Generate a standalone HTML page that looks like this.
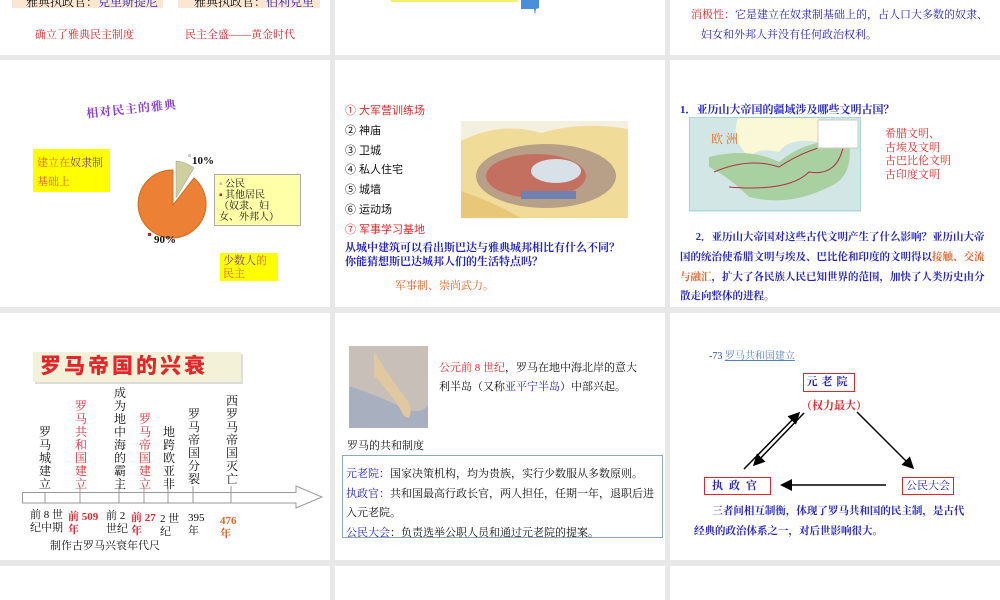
<!DOCTYPE html>
<html><head><meta charset="utf-8"><style>
*{margin:0;padding:0;box-sizing:border-box}
body{width:1000px;height:600px;background:#e8e8e8;position:relative;overflow:hidden;font-family:"Liberation Serif","Noto Serif CJK SC","Noto Sans CJK SC",serif;font-size:11px;color:#111}
.s{position:absolute;background:#fff;overflow:hidden}
.a{position:absolute;white-space:nowrap}
.r{color:#e2262a}.b{color:#2323c8}.o{color:#e8622a}
.v{position:absolute;width:14px;text-align:center;line-height:13px;font-size:12px}
</style></head><body>
<!-- row1 -->
<div class="s" style="left:0;top:0;width:330px;height:55px">
 <div class="a" style="left:12px;top:-7px;width:151px;height:15px;background:#fbe6d2;padding-left:14px;font-size:12px">雅典执政官：<span class="b">克里斯提尼</span></div>
 <div class="a" style="left:178px;top:-7px;width:142px;height:15px;background:#fbe6d2;padding-left:16px;font-size:12px">雅典执政官：<span class="b">伯利克里</span></div>
 <div class="a r" style="left:35px;top:26px">确立了雅典民主制度</div>
 <div class="a r" style="left:185px;top:26px">民主全盛——黄金时代</div>
</div>
<div class="s" style="left:335px;top:0;width:330px;height:55px">
 <div class="a" style="left:56px;top:0;width:127px;height:2px;background:#f5f06a"></div>
 <svg class="a" style="left:186px;top:0" width="20" height="16"><path d="M0 0H18V8L15 9L14 15L13 9L0 9Z" fill="#4a8fd8"/></svg>
</div>
<div class="s" style="left:670px;top:0;width:330px;height:55px">
 <div class="a b" style="left:21px;top:6px"><span class="r">消极性：</span>它是建立在奴隶制基础上的，占人口大多数的奴隶、</div>
 <div class="a b" style="left:31px;top:26px">妇女和外邦人并没有任何政治权利。</div>
</div>
<!-- row2 -->
<div class="s" style="left:0;top:60px;width:330px;height:247px">
 <div class="a" style="left:86px;top:40px;color:#8a3ad8;font-weight:bold;font-size:12px;transform:rotate(-6deg);letter-spacing:1px">相对民主的雅典</div>
 <div class="a" style="left:33px;top:89px;width:77px;height:43px;background:#ffff00;padding:5px 4px;line-height:19px;white-space:normal"><span class="o">建立在</span><span style="color:#7a3a8a">奴隶制</span><br><span class="o">基础上</span></div>
 <svg class="a" style="left:130px;top:90px" width="180" height="100">
  <path d="M43 55 L43 20 A34 34 0 1 0 64 28 Z" fill="#ec8034" stroke="#d06a20" stroke-width="1"/>
  <path d="M46 48 L46 11 A36 36 0 0 1 64 18 Z" fill="#cfcf9e" stroke="#999" stroke-width=".5"/>
  <rect x="58" y="4" width="3" height="3" fill="#ccc"/>
  <rect x="18" y="83" width="3" height="3" fill="#b22"/>
 </svg>
 <div class="a" style="left:192px;top:95px;font-weight:bold">10%</div>
 <div class="a" style="left:154px;top:174px;font-weight:bold">90%</div>
 <div class="a" style="left:214px;top:114px;width:87px;height:52px;background:#ffffa8;border:1px solid #aaa;font-size:10px;line-height:11px;padding:4px 4px;white-space:normal">
  <span style="color:#bbb">▪</span> 公民<br><span style="color:#b22">▪</span> 其他居民<br>（奴隶、妇<br>女、外邦人）</div>
 <div class="a" style="left:220px;top:193px;width:58px;height:28px;background:#ffff00;padding:2px 3px;line-height:13px;font-size:11px"><span style="color:#7a3a8a">少数人</span><span class="o">的</span><br><span class="o">民主</span></div>
</div>
<div class="s" style="left:335px;top:60px;width:330px;height:247px">
 <div class="a" style="left:10px;top:42px;line-height:19.8px;font-family:'Liberation Sans','Noto Sans CJK SC',sans-serif;font-size:11px"><span class="r">① 大军营训练场</span><br>② 神庙<br>③ 卫城<br>④ 私人住宅<br>⑤ 城墙<br>⑥ 运动场<br><span class="r">⑦ 军事学习基地</span></div>
 <svg class="a" style="left:126px;top:61px" width="167" height="97">
  <rect width="167" height="97" fill="#f0dc98"/>
  <path d="M0 20 Q40 0 80 12 Q120 0 167 8 V0 H0Z" fill="#f3f0e0"/>
  <ellipse cx="85" cy="55" rx="70" ry="32" fill="#b8a088"/>
  <ellipse cx="75" cy="55" rx="50" ry="22" fill="#c47060"/>
  <ellipse cx="95" cy="50" rx="25" ry="12" fill="#d8e0e8"/>
  <rect x="60" y="70" width="55" height="8" fill="#7080b0"/>
  <path d="M0 70 Q30 80 60 97 H0Z" fill="#e8c878"/>
 </svg>
 <div class="a b" style="left:10px;top:181px;line-height:14px;font-weight:bold">从城中建筑可以看出斯巴达与雅典城邦相比有什么不同？<br>你能猜想斯巴达城邦人们的生活特点吗？</div>
 <div class="a o" style="left:60px;top:217px">军事制、崇尚武力。</div>
</div>
<div class="s" style="left:670px;top:60px;width:330px;height:247px">
 <div class="a b" style="left:10px;top:41px;font-weight:bold">1．亚历山大帝国的疆域涉及哪些文明古国？</div>
 <svg class="a" style="left:19px;top:57px" width="172" height="95">
  <rect x=".5" y=".5" width="171" height="93" fill="#fbf8d8" stroke="#9cc"/>
  <path d="M0 0 H50 Q40 20 60 40 Q70 30 90 35 Q100 20 130 25 V0H172V95H0Z" fill="#b8dcef" opacity=".6"/>
  <path d="M20 40 Q60 30 90 45 Q120 20 160 25 Q165 60 140 70 Q100 90 60 80 Q40 60 20 50Z" fill="#a8d0a0"/>
  <path d="M25 55 Q60 40 90 50 Q120 30 155 25 Q150 60 120 55 Q100 75 40 70" fill="none" stroke="#b03040" stroke-width="1"/>
  <rect x="129" y="3" width="40" height="28" fill="#fff" stroke="#ccc"/>
  <text x="22" y="26" fill="#e87020" font-size="12">欧  洲</text>
 </svg>
 <div class="a r" style="left:215px;top:68px;line-height:13.5px">希腊文明、<br>古埃及文明<br>古巴比伦文明<br>古印度文明</div>
 <div class="a b" style="left:10px;top:168px;line-height:19.8px;width:312px;white-space:normal;font-weight:bold;font-size:10.5px">&nbsp;&nbsp;&nbsp;&nbsp;&nbsp;&nbsp;2．亚历山大帝国对这些古代文明产生了什么影响？亚历山大帝国的统治使希腊文明与埃及、巴比伦和印度的文明得以<span class="o">接触、交流与融汇</span>，扩大了各民族人民已知世界的范围，加快了人类历史由分散走向整体的进程。</div>
</div>
<!-- row3 -->
<div class="s" style="left:0;top:313px;width:330px;height:247px">
 <div class="a" style="left:33px;top:39px;width:208px;height:30px;background:#f3f2d8;box-shadow:2px 2px 0 #ddd"></div>
 <div class="a" style="left:40px;top:40px;color:#e2262a;font-weight:900;font-size:21px;letter-spacing:3px;font-family:'Noto Sans CJK SC',sans-serif;line-height:24px">罗马帝国的兴衰</div>
 <div class="v" style="left:38px;top:113px">罗<br>马<br>城<br>建<br>立</div>
 <div class="v r" style="left:74px;top:87px">罗<br>马<br>共<br>和<br>国<br>建<br>立</div>
 <div class="v" style="left:113px;top:74px">成<br>为<br>地<br>中<br>海<br>的<br>霸<br>主</div>
 <div class="v r" style="left:138px;top:100px">罗<br>马<br>帝<br>国<br>建<br>立</div>
 <div class="v" style="left:162px;top:113px">地<br>跨<br>欧<br>亚<br>非</div>
 <div class="v" style="left:187px;top:95px">罗<br>马<br>帝<br>国<br>分<br>裂</div>
 <div class="v" style="left:225px;top:82px">西<br>罗<br>马<br>帝<br>国<br>灭<br>亡</div>
 <svg class="a" style="left:20px;top:160px" width="305" height="40">
  <path d="M2.5 19.5 H276 V13 L302 24 L276 35 V30 H2.5Z" fill="#fff" stroke="#999"/>
  <g stroke="#999"><path d="M25 19V30M60 13V30M99 13V30M124 13V30M148 13V30M173 13V30M211 13V30"/></g>
 </svg>
 <div class="a" style="left:30px;top:196px;line-height:13px">前 8 世<br>纪中期</div>
 <div class="a r" style="left:68px;top:198px;line-height:13px;font-weight:bold">前 509<br>年</div>
 <div class="a" style="left:106px;top:197px;line-height:13px">前 2<br>世纪</div>
 <div class="a r" style="left:131px;top:199px;line-height:13px;font-weight:bold">前 27<br>年</div>
 <div class="a" style="left:160px;top:200px;line-height:13px">2 世<br>纪</div>
 <div class="a" style="left:188px;top:199px;line-height:13px">395<br>年</div>
 <div class="a o" style="left:220px;top:202px;line-height:13px;font-weight:bold">476<br>年</div>
 <div class="a" style="left:50px;top:224px">制作古罗马兴衰年代尺</div>
</div>
<div class="s" style="left:335px;top:313px;width:330px;height:247px">
 <svg class="a" style="left:14px;top:33px" width="80" height="82">
  <rect width="79" height="82" fill="#c8c0b8"/>
  <path d="M0 40 Q30 50 50 60 Q70 70 79 60 V82 H0Z" fill="#a8b0c0"/>
  <path d="M25 5 Q40 30 55 50 Q65 60 60 72 L55 70 Q45 50 25 30Z" fill="#e0c8a0"/>
 </svg>
 <div class="a" style="left:104px;top:46px"><span class="r">公元前 8 世纪</span>，罗马在地中海北岸的意大</div>
 <div class="a" style="left:104px;top:65px">利半岛（又称<span class="b">亚平宁半岛</span>）中部兴起。</div>
 <div class="a" style="left:12px;top:124px">罗马的共和制度</div>
 <div class="a" style="left:7px;top:142px;width:321px;height:83px;border:1px solid #8ab"></div>
 <div class="a" style="left:11px;top:152px;line-height:19.6px"><span class="b">元老院：</span>国家决策机构，均为贵族，实行少数服从多数原则。<br><span class="b">执政官：</span>共和国最高行政长官，两人担任，任期一年，退职后进<br>入元老院。<br><span class="b">公民大会</span>：负责选举公职人员和通过元老院的提案。</div>
</div>
<div class="s" style="left:670px;top:313px;width:330px;height:247px">
 <div class="a" style="left:39px;top:34px;font-size:10px"><span style="color:#2a4aa8">-73</span> <span style="color:#5080c8;text-decoration:underline">罗马共和国建立</span></div>
 <div class="a b" style="left:133px;top:60px;width:52px;height:19px;border:1px solid #e2262a;text-align:center;line-height:17px;letter-spacing:4px;font-weight:bold">元老院</div>
 <div class="a r" style="left:131px;top:84px;font-weight:bold">（权力最大）</div>
 <div class="a b" style="left:34px;top:164px;width:67px;height:18px;border:1px solid #e2262a;text-align:center;line-height:16px;letter-spacing:6px;font-weight:bold">执政官</div>
 <div class="a b" style="left:232px;top:164px;width:52px;height:18px;border:1px solid #e2262a;text-align:center;line-height:16px">公民大会</div>
 <svg class="a" style="left:0;top:0" width="330" height="247">
  <defs><marker id="m" markerWidth="8" markerHeight="8" refX="6" refY="4" orient="auto"><path d="M0 0L8 4L0 8Z" fill="#000"/></marker></defs>
  <g stroke="#000" stroke-width="1.5" marker-end="url(#m)">
   <line x1="74" y1="156" x2="128" y2="101"/>
   <line x1="134" y1="100" x2="85" y2="151"/>
   <line x1="187" y1="99" x2="242" y2="154"/>
   <line x1="216" y1="172" x2="113" y2="172"/>
  </g>
 </svg>
 <div class="a b" style="left:24px;top:189px;line-height:19.6px;font-weight:bold;font-size:10.5px">&nbsp;&nbsp;&nbsp;&nbsp;&nbsp;&nbsp;&nbsp;三者间相互制衡，体现了罗马共和国的民主制，是古代<br>经典的政治体系之一，对后世影响很大。</div>
</div>
<!-- row4 -->
<div class="s" style="left:0;top:566px;width:330px;height:34px"></div>
<div class="s" style="left:335px;top:566px;width:330px;height:34px"></div>
<div class="s" style="left:670px;top:566px;width:330px;height:34px"></div>
</body></html>
